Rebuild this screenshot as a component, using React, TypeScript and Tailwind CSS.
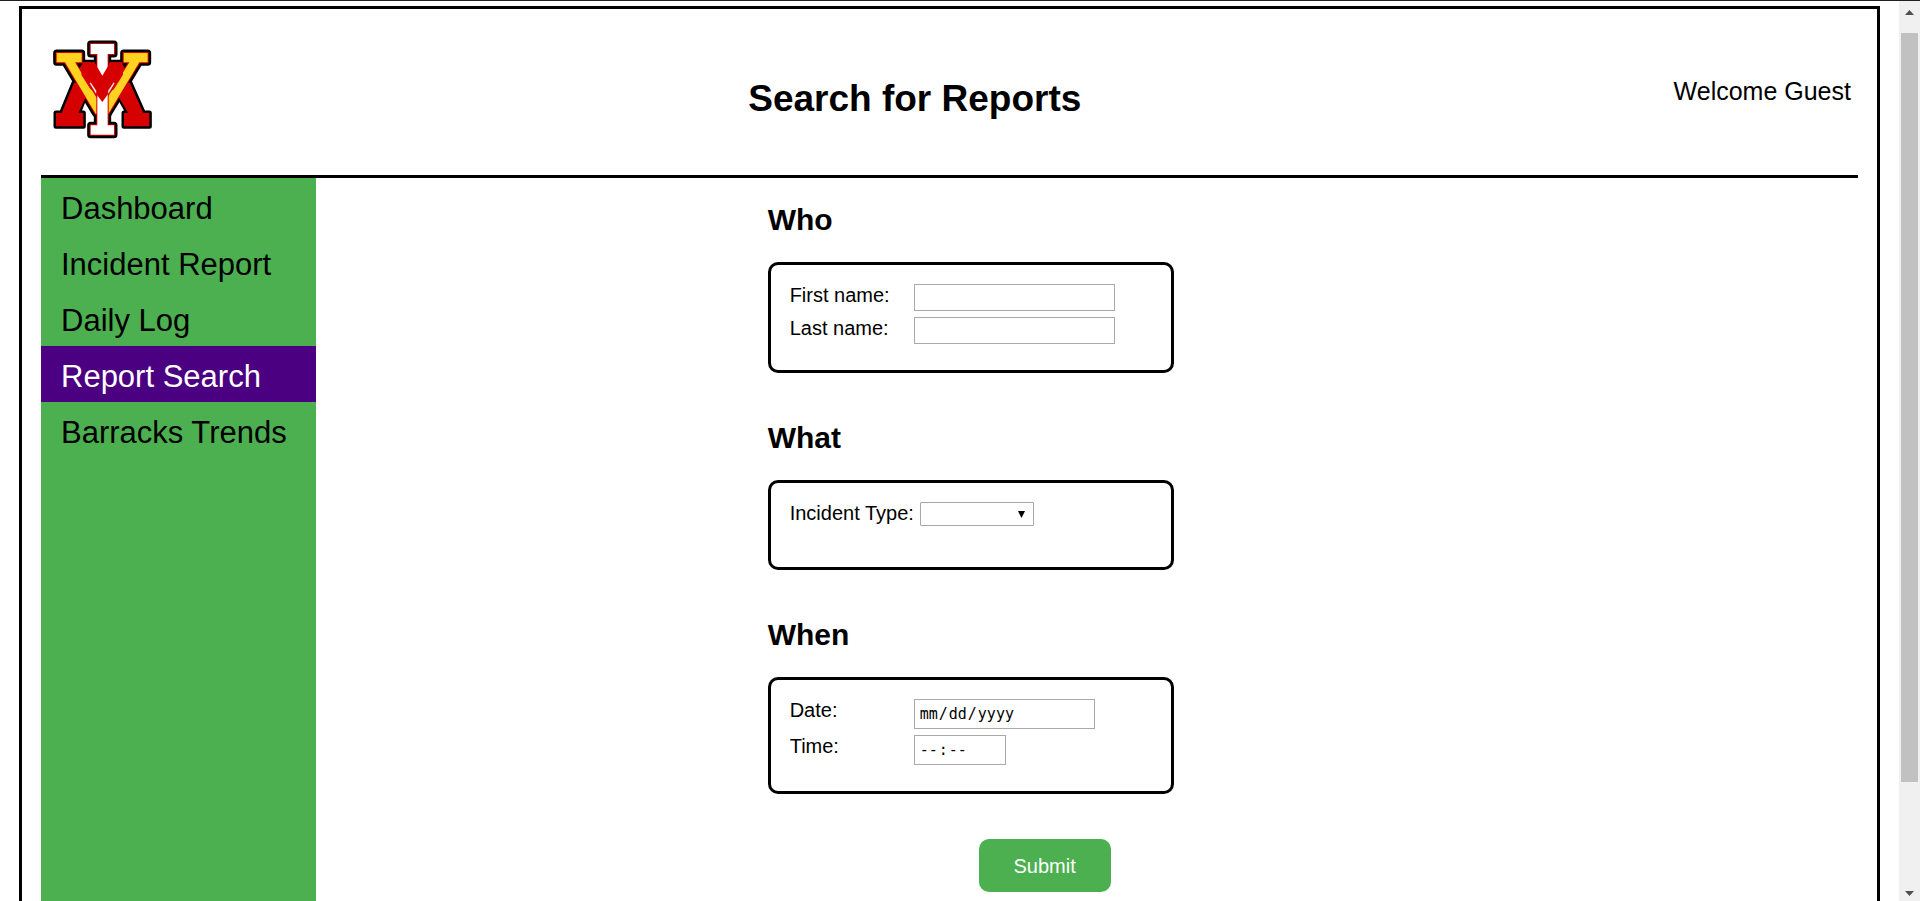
import type { ReactNode } from "react";

const NAV_ITEMS = [
  { label: "Dashboard", active: false },
  { label: "Incident Report", active: false },
  { label: "Daily Log", active: false },
  { label: "Report Search", active: true },
  { label: "Barracks Trends", active: false },
];

const VEE =
  "M50 70H125V98H105L167 200L187 232L205 200L268 98H251V70H323V98H298L205 252H167L75 98H50Z";
const EYE =
  "M152 43H222V73H203V287H222V315H152V287H172V73H152Z";

function Logo() {
  return (
    <svg viewBox="33 22 315 315" className="size-[105px]" role="img" aria-label="VMI">
      <g fill="#000" stroke="#000" strokeWidth="21" strokeLinejoin="round">
        <path
          d="M48 250H65L102 160L130 98H248L270 160L310 250H328V290H252V250H265L238 202L205 240H167L135 200L115 250H130V290H48Z"
          strokeWidth="15"
        />
        <path d={VEE} />
        <path d={EYE} />
      </g>
      <path d="M48 250H65L102 160L110 160L137 203L115 250H130V290H48Z" fill="#d60000" />
      <path d="M328 250H310L270 160L262 160L236 203L265 250H252V290H328Z" fill="#d60000" />
      <path d="M128 98H163L187 138L210 98H246L256 118L205 208H167L117 118Z" fill="#d60000" />
      <g stroke="#d60000" strokeWidth="6" strokeLinejoin="round">
        <path d={VEE} fill="#ffd31f" className="[paint-order:stroke]" />
        <path d={EYE} fill="#fff" className="[paint-order:stroke]" />
      </g>
      <path
        d="M129 98H163L172 113L187 138L203 111L210 98H246L249 135L222 178L205 192L187 217L168 192L151 178L124 135Z"
        fill="#d60000"
      />
      <path
        d="M150 161L168 191V183L152 159ZM223 161L205 191V183L221 159Z"
        fill="#fff"
        stroke="#fff"
        strokeWidth="1"
      />
      <path d="M112 102H128L119 114ZM261 102H246L254 114Z" fill="#000" />
    </svg>
  );
}

function Section({ title, children }: { title: string; children: ReactNode }) {
  return (
    <section>
      <h2 className="text-[30px] leading-[34px] font-bold">{title}</h2>
      <div className="mt-[25px] rounded-[10px] border-3 border-black px-[19px] pt-[19px] pb-[26px]">
        {children}
      </div>
    </section>
  );
}

function Field({ id, label, children }: { id: string; label: string; children: ReactNode }) {
  return (
    <div className="flex items-start">
      <label htmlFor={id} className="w-[124px] shrink-0 text-xl leading-[23px]">
        {label}
      </label>
      {children}
    </div>
  );
}

function Scrollbar() {
  return (
    <div className="flex w-[21px] shrink-0 flex-col items-center bg-[#f0f0f0]" aria-hidden="true">
      <svg viewBox="0 0 21 32" className="h-8 w-[21px]">
        <path d="M6 14L10.500 9L15 14Z" fill="#505050" />
      </svg>
      <div className="w-[17px] grow-749 bg-[#c1c1c1]" />
      <div className="grow-98" />
      <svg viewBox="0 0 21 21" className="h-[21px] w-[21px]">
        <path d="M6 11L10.500 16L15 11Z" fill="#505050" />
      </svg>
    </div>
  );
}

export default function App() {
  return (
    <div className="flex h-screen overflow-hidden border-t border-[#202124] bg-white font-['Liberation_Sans',Arial,sans-serif] text-black">
      <div className="min-w-0 grow overflow-hidden px-[19px] pt-[5px]">
        <div className="flex min-h-[1080px] flex-col border-3 border-black px-[19px]">
          <header className="flex h-[169px] shrink-0 items-start justify-between border-b-3 border-black pt-7 pr-[7px] pl-[10px]">
            <Logo />
            <h1 className="pt-10 text-[37px] leading-[44px] font-bold">Search for Reports</h1>
            <p className="pt-10 text-[25px] leading-[29px]">Welcome Guest</p>
          </header>

          <div className="flex grow">
            <nav className="w-[275px] shrink-0 bg-[#4caf50]">
              <ul>
                {NAV_ITEMS.map((item) => (
                  <li key={item.label}>
                    <a
                      href="#"
                      aria-current={item.active ? "page" : undefined}
                      className={
                        item.active
                          ? "block bg-[#4b0082] px-5 pt-[14px] pb-2 text-[31px] leading-[34px] text-white"
                          : "block px-5 pt-[14px] pb-2 text-[31px] leading-[34px]"
                      }
                    >
                      {item.label}
                    </a>
                  </li>
                ))}
              </ul>
            </nav>

            <main className="grid grow grid-cols-[33fr_406px_50fr] pt-[25px]">
              <form className="col-start-2" onSubmit={(event) => event.preventDefault()}>
                <div className="flex flex-col gap-12">
                  <Section title="Who">
                    <div className="flex flex-col gap-[6px]">
                      <Field id="first-name" label="First name:">
                        <input id="first-name" type="text" className="h-[27px] w-[201px] border border-[#a9a9a9] px-1" />
                      </Field>
                      <Field id="last-name" label="Last name:">
                        <input id="last-name" type="text" className="h-[27px] w-[201px] border border-[#a9a9a9] px-1" />
                      </Field>
                    </div>
                  </Section>

                  <Section title="What">
                    <div className="flex items-start gap-[6px] pb-[15px]">
                      <label htmlFor="incident-type" className="text-xl leading-[23px]">
                        Incident Type:
                      </label>
                      <div className="relative">
                        <select
                          id="incident-type"
                          className="block h-6 w-[114px] appearance-none rounded-[1px] border border-[#a9a9a9] bg-white px-1"
                        >
                          <option value=""></option>
                        </select>
                        <svg
                          viewBox="0 0 7 7"
                          className="pointer-events-none absolute top-[9px] right-[9px] size-[7px]"
                          aria-hidden="true"
                        >
                          <path d="M0 0H7L3.500 7Z" fill="#000" />
                        </svg>
                      </div>
                    </div>
                  </Section>

                  <Section title="When">
                    <div className="flex flex-col gap-[6px]">
                      <Field id="date" label="Date:">
                        <input
                          id="date"
                          type="date"
                          className="h-[30px] w-[181px] border border-[#a9a9a9] px-1 font-['DejaVu_Sans_Mono',monospace] text-[15px] [&::-webkit-calendar-picker-indicator]:hidden"
                        />
                      </Field>
                      <Field id="time" label="Time:">
                        <input
                          id="time"
                          type="time"
                          className="h-[30px] w-[92px] border border-[#a9a9a9] px-1 font-['DejaVu_Sans_Mono',monospace] text-[15px] [&::-webkit-calendar-picker-indicator]:hidden [&::-webkit-datetime-edit-ampm-field]:hidden"
                        />
                      </Field>
                    </div>
                  </Section>
                </div>

                <button
                  type="submit"
                  className="mt-[45px] ml-[211px] h-[53px] w-[132px] rounded-[10px] bg-[#4caf50] text-xl text-white"
                >
                  Submit
                </button>
              </form>
            </main>
          </div>
        </div>
      </div>
      <Scrollbar />
    </div>
  );
}
